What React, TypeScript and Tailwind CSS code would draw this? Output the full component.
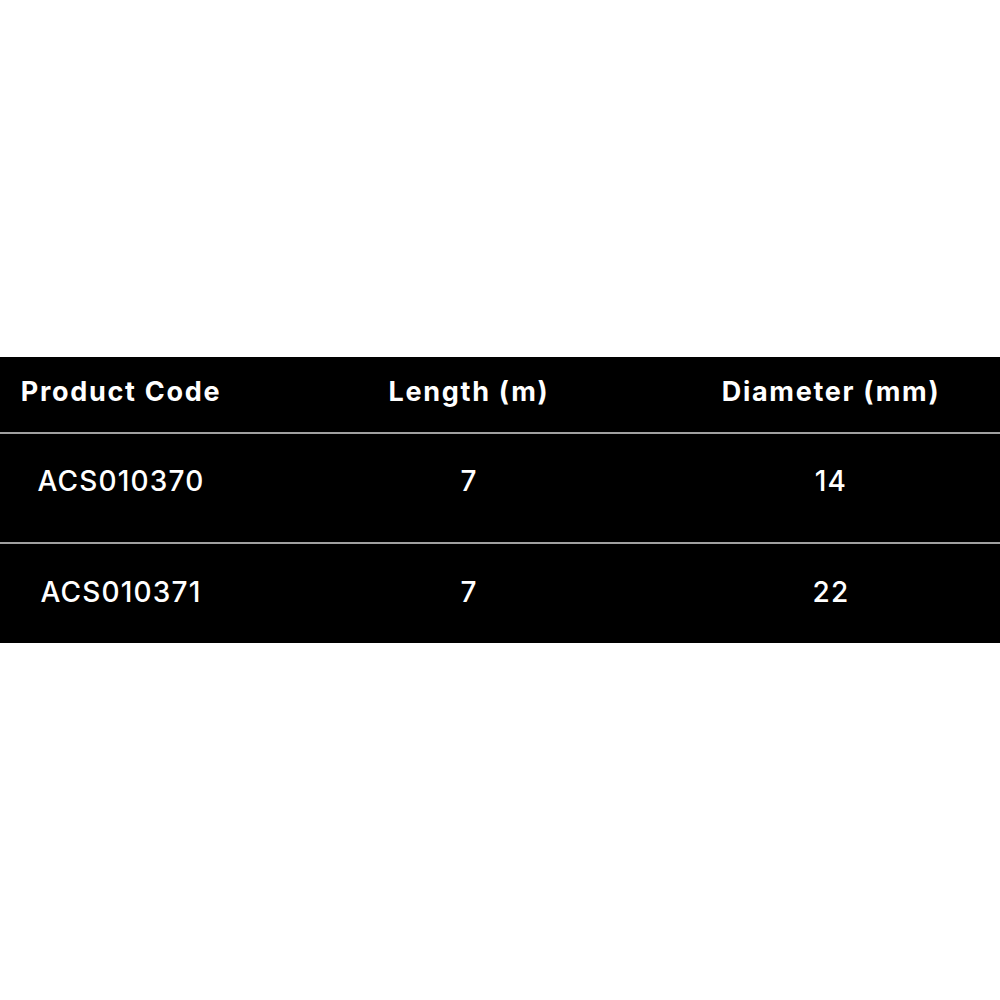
import React from "react";

const rows = [
  { code: "ACS010370", length: "7", diameter: "14", h: "h-[108px]", pb: "pb-[14px]" },
  { code: "ACS010371", length: "7", diameter: "22", h: "h-[99px]", pb: "pb-[4px]" },
];

export default function App() {
  return (
    <div
      className="min-h-screen w-full bg-white pt-[357px]"
      style={{ fontFamily: "Inter, 'Liberation Sans', sans-serif" }}
    >
      <div className="w-full bg-black text-white">
        {/* header */}
        <div className="grid h-[75px] grid-cols-[242px_454px_270px_1fr] items-center pb-[5px] text-[27px] font-bold tracking-[1.7px]">
          <div className="text-center">Product Code</div>
          <div className="text-center">Length (m)</div>
          <div className="text-center">Diameter (mm)</div>
          <div />
        </div>
        {rows.map((r) => (
          <div key={r.code}>
            <div className="h-[2px] bg-[#a0a0a0]" />
            <div
              className={`grid ${r.h} ${r.pb} grid-cols-[242px_454px_270px_1fr] items-center text-[28px] font-medium tracking-[1.2px]`}
            >
              <div className="text-center">{r.code}</div>
              <div className="text-center">{r.length}</div>
              <div className="text-center">{r.diameter}</div>
              <div />
            </div>
          </div>
        ))}
      </div>
    </div>
  );
}
